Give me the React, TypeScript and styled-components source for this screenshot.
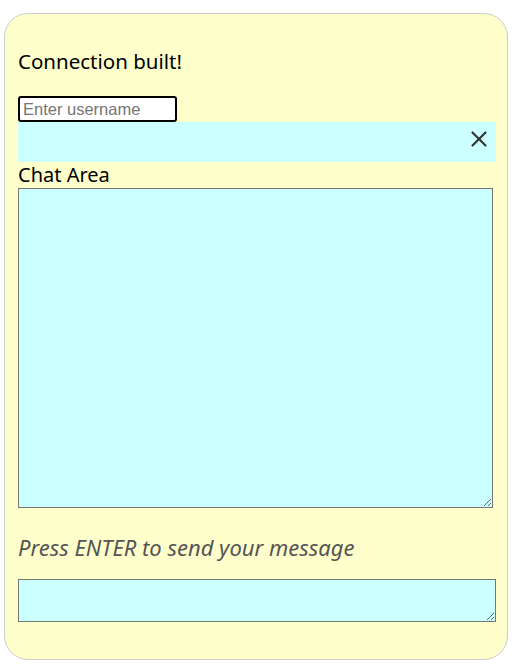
import styled, { createGlobalStyle } from "styled-components";
import { X } from "lucide-react";

const GlobalStyle = createGlobalStyle`
  body {
    margin: 0;
    background: #ffffff;
    font-family: "Noto Sans", "Open Sans", sans-serif;
  }
`;

const Page = styled.div`
  padding: 13px 4px 8px 4px;
`;

const Card = styled.div`
  width: 504px;
  height: 647px;
  box-sizing: border-box;
  background-color: #ffffcc;
  border: 1px solid #cccccc;
  border-radius: 24px;
  padding: 0 11px 0 13px;
  display: flex;
  flex-direction: column;
`;

const Status = styled.div`
  margin-top: 34px;
  font-size: 20.5px;
  line-height: 26px;
  color: #000;
`;

const UsernameInput = styled.input`
  margin-top: 22px;
  width: 159px;
  height: 26px;
  box-sizing: border-box;
  border: 2px solid #000;
  border-radius: 3px;
  padding: 0 3px;
  font-family: "Liberation Sans", Arial, sans-serif;
  font-size: 16.5px;
  background: #fff;
  outline: none;
  &::placeholder {
    color: #757575;
  }
`;

const NoticeBar = styled.div`
  height: 40px;
  box-sizing: border-box;
  background-color: #ccffff;
  display: flex;
  align-items: center;
  justify-content: flex-end;
  padding: 0 4px 6px 0;
  color: #333;
`;

const Label = styled.div`
  font-size: 20px;
  line-height: 26px;
  color: #000;
`;

const TextBox = styled.textarea<{ $w: number; $h: number }>`
  display: block;
  width: ${(p) => p.$w}px;
  height: ${(p) => p.$h}px;
  box-sizing: border-box;
  border: 1px solid #767676;
  background-color: #ccffff;
  margin: 0;
  padding: 2px;
  outline: none;
`;

const Hint = styled.div`
  margin-top: 26px;
  margin-bottom: 19px;
  font-size: 22px;
  line-height: 26px;
  font-style: italic;
  color: #555555;
`;

export default function App() {
  return (
    <Page>
      <GlobalStyle />
      <Card>
        <Status>Connection built!</Status>
        <UsernameInput placeholder="Enter username" />
        <NoticeBar>
          <X size={26} strokeWidth={2} />
        </NoticeBar>
        <Label>Chat Area</Label>
        <TextBox $w={475} $h={320} />
        <Hint>Press ENTER to send your message</Hint>
        <TextBox $w={478} $h={43} />
      </Card>
    </Page>
  );
}
